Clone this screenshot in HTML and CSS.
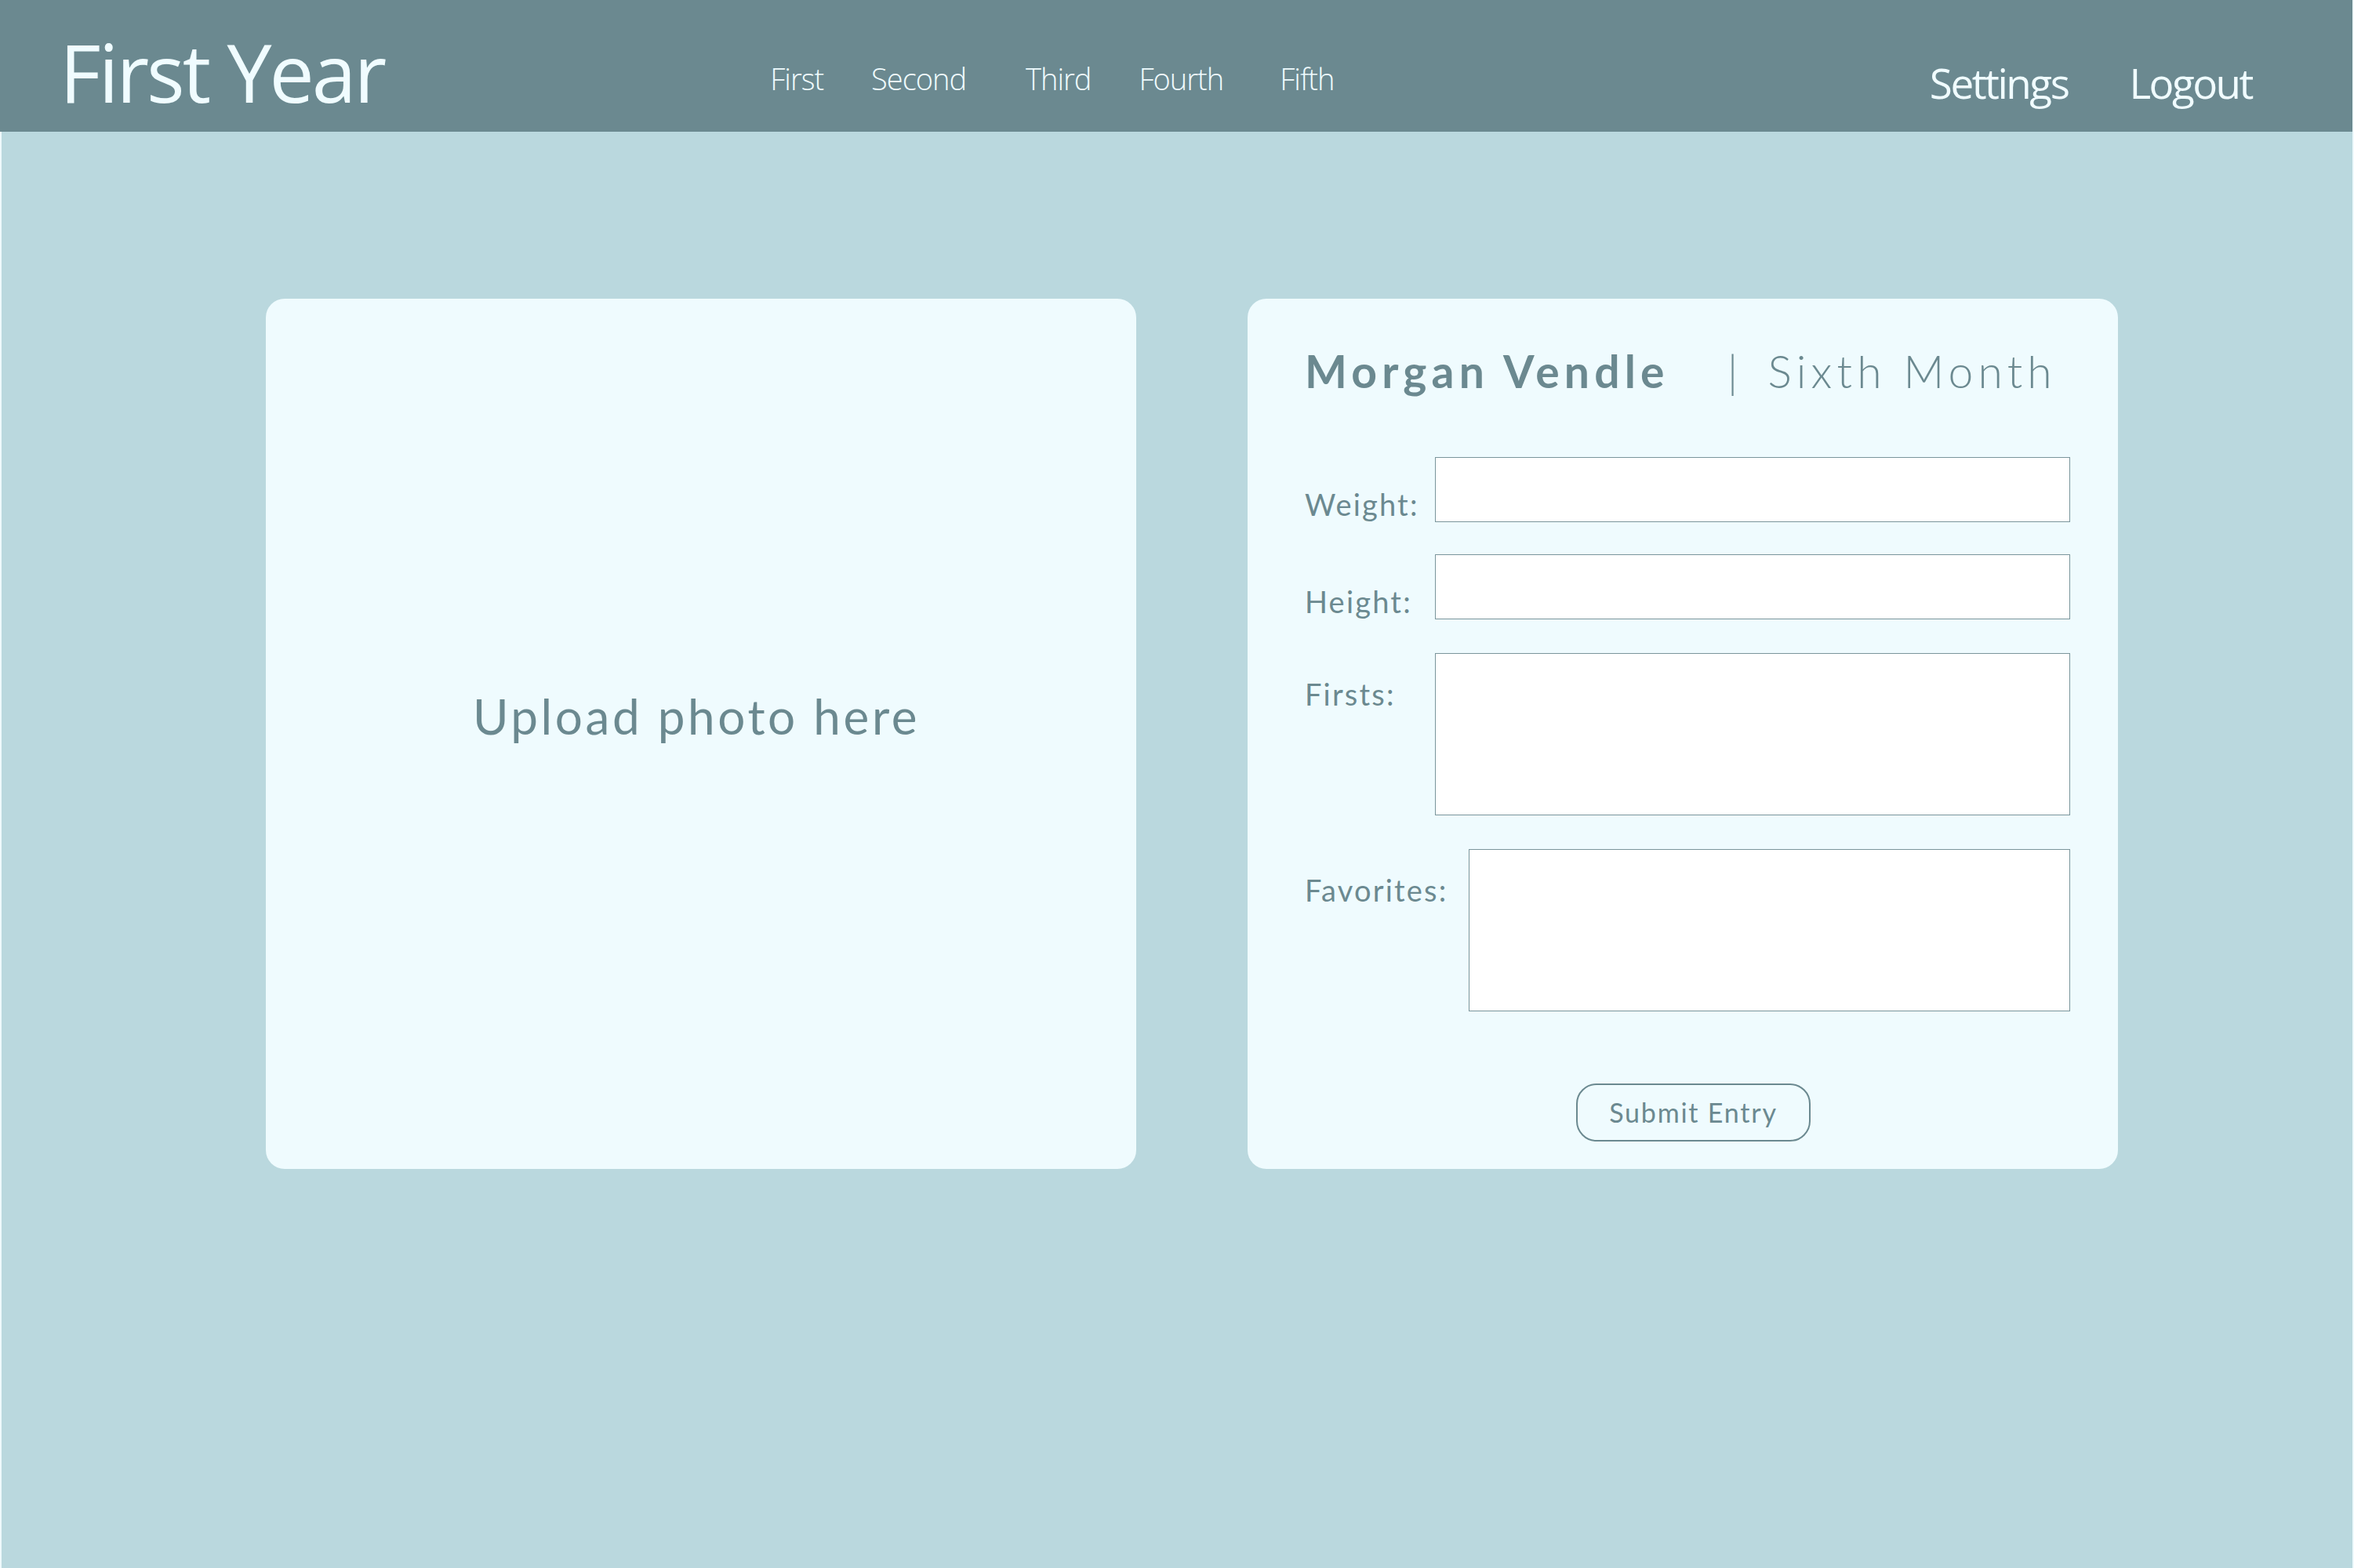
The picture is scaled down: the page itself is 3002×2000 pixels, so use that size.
FILE: index.html
```html
<!DOCTYPE html>
<html lang="en">
<head>
<meta charset="utf-8">
<title>First Year</title>
<link rel="stylesheet" href="styles.css">
</head>
<body>
<header class="topbar">
  <div class="logo">First Year</div>
  <nav class="months">
    <a class="month m1">First</a>
    <a class="month m2">Second</a>
    <a class="month m3">Third</a>
    <a class="month m4">Fourth</a>
    <a class="month m5">Fifth</a>
  </nav>
  <nav class="account">
    <a class="acct">Settings</a>
    <a class="acct acct-last">Logout</a>
  </nav>
</header>
<main class="page">
  <section class="card photo-card">
    <div class="upload-text">Upload photo here</div>
  </section>
  <section class="card form-card">
    <h1 class="title"><span class="name">Morgan Vendle</span><span class="sep">|</span><span class="month-name">Sixth Month</span></h1>
    <form class="entry">
      <div class="row row-input">
        <label class="label">Weight:</label>
        <input class="field" type="text">
      </div>
      <div class="row row-input">
        <label class="label">Height:</label>
        <input class="field" type="text">
      </div>
      <div class="row row-area">
        <label class="label">Firsts:</label>
        <textarea class="field area"></textarea>
      </div>
      <div class="row row-area">
        <label class="label label-auto">Favorites:</label>
        <textarea class="field area"></textarea>
      </div>
      <div class="actions">
        <button class="submit" type="button">Submit Entry</button>
      </div>
    </form>
  </section>
</main>
</body>
</html>
```
FILE: styles.css
```css
html, body {
  margin: 0;
  padding: 0;
}
body {
  width: 3002px;
  height: 2000px;
  background: #eef9fb;
  overflow: hidden;
  font-family: "Open Sans", "Liberation Sans", sans-serif;
}
.topbar {
  width: 3000px;
  height: 168px;
  background: #6b8990;
  display: flex;
  align-items: flex-start;
  color: #f0fcff;
  box-sizing: border-box;
}
.logo {
  font-size: 102px;
  line-height: 1;
  letter-spacing: -3px;
  padding-top: 41px;
  margin-left: 76px;
  font-weight: 400;
}
.months {
  display: flex;
  margin-left: 492px;
  padding-top: 81px;
}
.month {
  font-size: 38px;
  line-height: 1;
  font-weight: 300;
  letter-spacing: -1px;
}
.m2 { margin-left: 61px; }
.m3 { margin-left: 76px; }
.m4 { margin-left: 61px; }
.m5 { margin-left: 72px; }
.account {
  display: flex;
  margin-left: auto;
  margin-right: 128px;
  padding-top: 79px;
}
.acct {
  font-size: 53px;
  line-height: 1;
  letter-spacing: -2.5px;
}
.acct-last { margin-left: 78px; }

.page {
  margin-left: 2px;
  width: 2998px;
  height: 1832px;
  background: #bad8de;
  display: flex;
  align-items: flex-start;
  padding: 213px 0 0 337px;
  box-sizing: border-box;
  gap: 142px;
}
.card {
  width: 1110px;
  height: 1110px;
  background: #effbfe;
  border-radius: 24px;
  box-sizing: border-box;
  color: #6b8990;
  font-family: "Lato", "Liberation Sans", sans-serif;
}
.photo-card {
  display: flex;
  align-items: center;
  justify-content: center;
  padding: 0 12px 46px 0;
}
.upload-text {
  font-size: 62px;
  line-height: 1;
  letter-spacing: 3.6px;
}
.form-card {
  padding: 64px 61px 0 73px;
}
.title {
  margin: 0;
  font-size: 57px;
  line-height: 1;
  font-weight: 400;
  display: flex;
  white-space: nowrap;
}
.name {
  font-weight: 700;
  letter-spacing: 6.2px;
}
.sep {
  margin-left: 74px;
  font-weight: 300;
}
.month-name {
  margin-left: 38px;
  font-weight: 300;
  letter-spacing: 6.2px;
}
.entry {
  margin-top: 81px;
  display: flex;
  flex-direction: column;
}
.row {
  display: flex;
}
.row + .row { margin-top: 41px; }
.row-area + .row-area { margin-top: 43px; }
.row-input + .row-area { margin-top: 43px; }
.row-input { align-items: flex-end; }
.row-area { align-items: flex-start; }
.label {
  width: 166px;
  flex: none;
  font-size: 38px;
  line-height: 1;
  letter-spacing: 2.2px;
  padding-bottom: 4px;
}
.row-area .label { padding-top: 33px; padding-bottom: 0; }
.label-auto {
  width: auto;
  margin-right: 27px;
}
.field {
  flex: 1;
  height: 83px;
  margin: 0;
  border: 1.5px solid #7a959b;
  background: #ffffff;
  box-sizing: border-box;
  padding: 0;
  font: inherit;
  resize: none;
  display: block;
}
.area { height: 207px; }
.actions {
  margin-top: 92px;
  padding-left: 346px;
  display: flex;
}
.submit {
  width: 299px;
  height: 74px;
  border: 2px solid #6b8990;
  border-radius: 26px;
  background: #effbfe;
  color: #6b8990;
  font-family: "Lato", "Liberation Sans", sans-serif;
  font-size: 34px;
  letter-spacing: 1.8px;
  padding: 0;
  line-height: 1;
}
```
